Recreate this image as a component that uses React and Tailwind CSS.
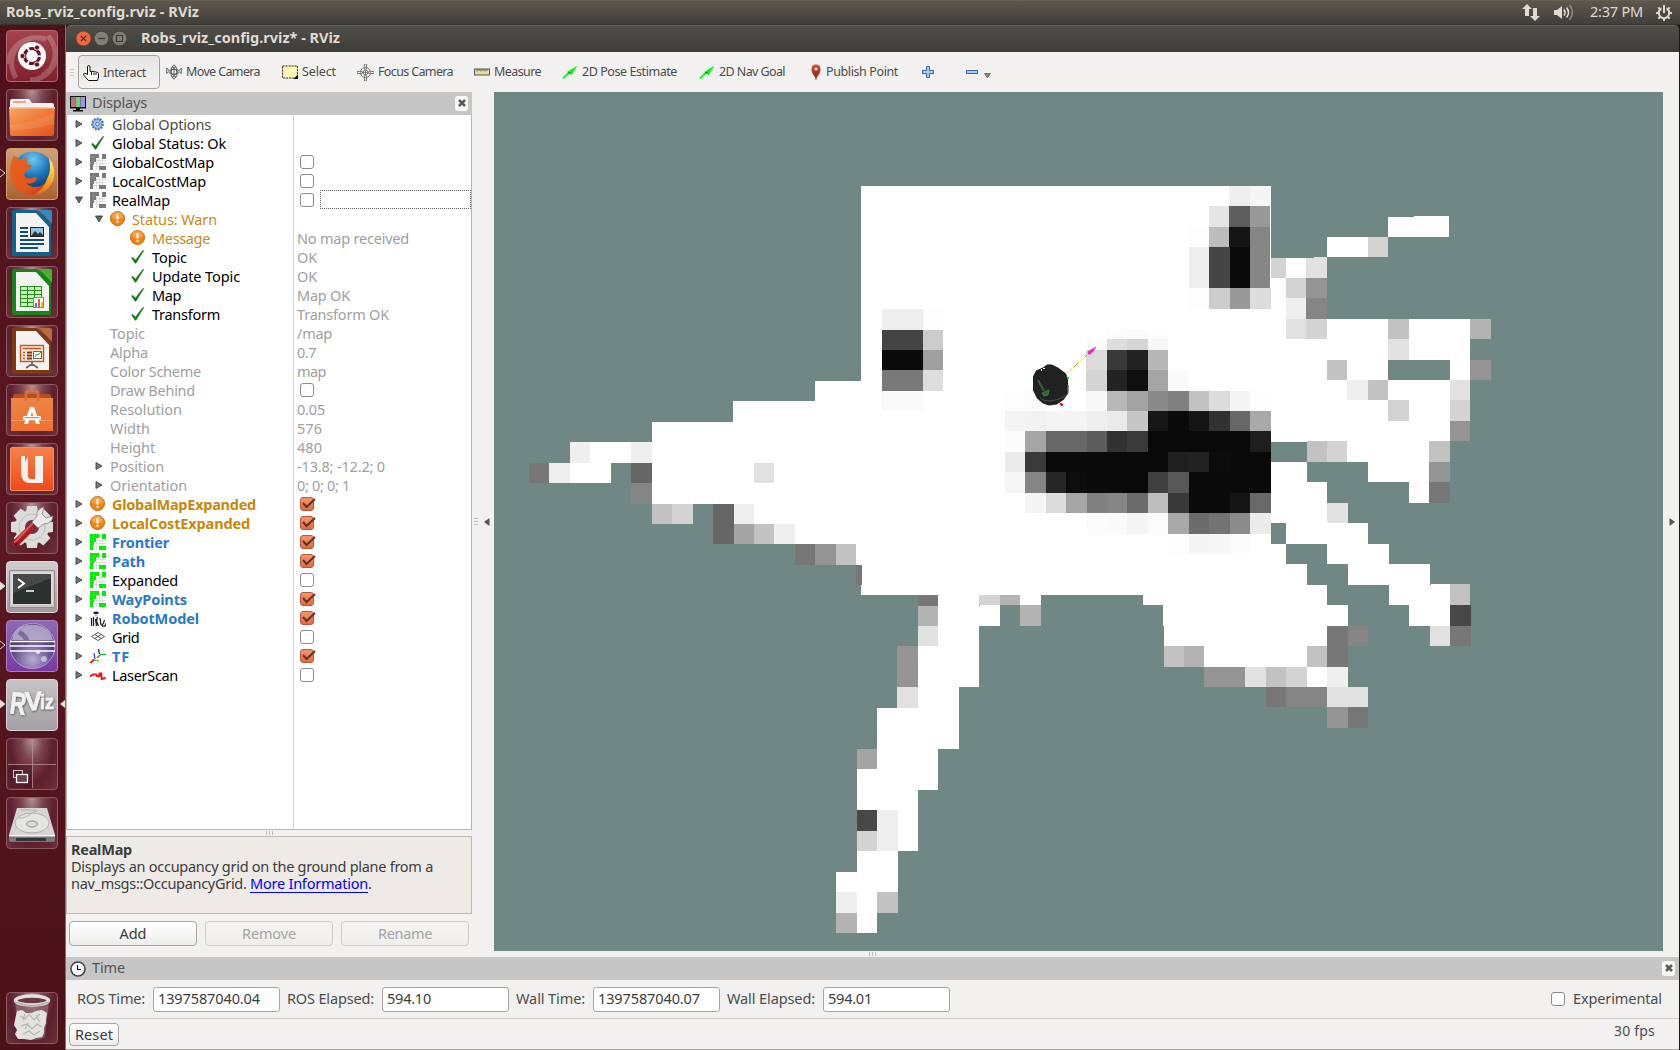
import React, { useLayoutEffect, useRef, useState } from 'react';

/* Single line of text spaced out to fill a given width */
function Fit({ w, className = '', children }) {
  const ref = useRef(null);
  const [spacing, setSpacing] = useState(0);
  useLayoutEffect(() => {
    const el = ref.current;
    const natural = el.getBoundingClientRect().width;
    setSpacing((w - natural) / children.length);
  }, []);
  return (
    <span className={`inline-block shrink-0 whitespace-pre ${className}`} style={{ width: w }}>
      <span ref={ref} style={{ letterSpacing: spacing }}>{children}</span>
    </span>
  );
}

/* ---------- launcher ---------- */

const Svg = ({ children, className = 'block size-[52px]' }) => (
  <svg viewBox="0 0 52 52" className={className}>{children}</svg>
);

const DashIcon = () => (
  <Svg>
    <path d="M2 34C4 14 22 4 40 9M50 20c2 18-12 30-26 30M10 48C0 30 8 12 26 8M42 6c12 14 8 32-6 40" fill="none" stroke="#fff" strokeOpacity=".22" strokeWidth="5" />
    <circle cx="26" cy="26" r="14" fill="#fff" />
    <circle cx="26" cy="26" r="7.5" fill="none" stroke="#651422" strokeWidth="3.2" strokeDasharray="13.7 2" strokeDashoffset="-1" />
    <g fill="#651422" stroke="#fff" strokeWidth=".8">
      <circle cx="16.500" cy="26" r="2.600" />
      <circle cx="31" cy="17.500" r="2.600" />
      <circle cx="31" cy="34.500" r="2.600" />
    </g>
  </Svg>
);

const FilesIcon = () => (
  <Svg>
    <defs>
      <linearGradient id="folder" x1="0" y1="0" x2="1" y2="1"><stop offset="0" stopColor="#f6a869" /><stop offset=".5" stopColor="#ee7b37" /><stop offset="1" stopColor="#e6501c" /></linearGradient>
    </defs>
    <path d="M4 20V12q0-2 2-2h17l3 4h20q2 0 2 2v6H4z" fill="#f4f1ee" />
    <rect x="7" y="12" width="13" height="2" fill="#f1a27c" />
    <path d="M3 18h46l-1 27q0 2-2 2H6q-2 0-2-2z" fill="url(#folder)" />
    <path d="M3 18h46v1.500H3z" fill="#fbc79e" />
    <path d="M4 36q22-2 44-12l-.5 11q-20 6-43.500 6z" fill="#fff" fillOpacity=".1" />
  </Svg>
);

const FirefoxIcon = () => (
  <Svg>
    <defs>
      <radialGradient id="globe" cx=".5" cy=".2" r=".8"><stop offset="0" stopColor="#6ec8ee" /><stop offset=".5" stopColor="#1c74b8" /><stop offset="1" stopColor="#0b2d63" /></radialGradient>
      <linearGradient id="fox" x1="0" y1="0" x2="1" y2="1"><stop offset="0" stopColor="#e6641e" /><stop offset=".6" stopColor="#e4571d" /><stop offset="1" stopColor="#c8301c" /></linearGradient>
      <linearGradient id="tail" x1="0" y1="0" x2="0" y2="1"><stop offset="0" stopColor="#fff08a" /><stop offset=".5" stopColor="#fcb92c" /><stop offset="1" stopColor="#e4631d" /></linearGradient>
    </defs>
    <circle cx="27" cy="24" r="20.500" fill="url(#globe)" />
    <path d="M8 8q4 1 6 4 4-2 8-2-3 4 0 6 2 1 4 1-1 4-6 6-3 3-1 6 4 3 9 0 3 0 3 2-4 6-11 4 6 6 15 3 7-4 8-12 2-4 4-2-1 12-8 18-8 6-19 4Q9 43 5 32 2 18 8 8z" fill="url(#fox)" />
    <path d="M43 10q7 9 5 20-5 15-20 17 11-7 13-16 5-8 2-21z" fill="url(#tail)" />
  </Svg>
);

function OfficeIcon({ edge, light, children }) {
  return (
    <Svg>
      <path d="M8 3h23l14 13v31q0 2-2 2H8q-2 0-2-2V5q0-2 2-2z" fill={edge} />
      <path d="M10 6h20l13 14v25H10z" fill="#f4f3f2" />
      <path d="M33 3h11q2 0 2 2v12z" fill={light} />
      {children}
    </Svg>
  );
}

const WriterIcon = () => (
  <OfficeIcon edge="#12628f" light="#2f8cbc">
    <path d="M14 21h8M14 25h8M14 29h8M14 33h24M14 37h24M14 41h18" stroke="#0d4f78" strokeWidth="1.800" />
    <rect x="24.500" y="20.500" width="13" height="9" fill="#8cc6e8" stroke="#222" />
    <path d="M25 29l4-5 3 3 2-2 4 4z" fill="#333" />
  </OfficeIcon>
);

const CalcIcon = () => (
  <OfficeIcon edge="#17841b" light="#43b52d">
    <rect x="14.500" y="20.500" width="21" height="20" fill="#c9f4bd" stroke="#24901b" />
    <path d="M14 24.500h22M14 28.500h22M14 32.500h22M14 36.500h22M21.500 20v21M28.500 20v21" stroke="#24901b" />
    <rect x="27.500" y="31.500" width="10" height="10" fill="#fff" stroke="#888" />
    <path d="M29 41v-4h2v4z" fill="#2a8fd0" /><path d="M32 41v-8h2v8z" fill="#e6611d" /><path d="M35 41v-5h2v5z" fill="#edb51f" />
  </OfficeIcon>
);

const ImpressIcon = () => (
  <OfficeIcon edge="#7c3a14" light="#b86b3c">
    <rect x="14.500" y="20.500" width="23" height="16" fill="#fbe7d9" stroke="#c3561c" strokeWidth="1.400" />
    <path d="M17 23.500h18" stroke="#c3561c" strokeWidth="1.500" />
    <path d="M17 27.500h2M17 30.500h2M17 33.500h2" stroke="#c3561c" strokeWidth="1.500" />
    <path d="M21 27.500h5M21 30.500h5M21 33.500h5" stroke="#7c3a14" strokeWidth="1.800" />
    <rect x="27.500" y="26.500" width="8" height="7" fill="#fff" stroke="#666" />
    <path d="M29 32l2-3 1 1 3-3" stroke="#2f9a31" fill="none" />
    <path d="M26 37v3M26 39l-6 4M26 39l6 4" stroke="#666" strokeWidth="1.800" fill="none" />
  </OfficeIcon>
);

const SoftwareIcon = () => (
  <Svg>
    <defs><linearGradient id="bag" x1="0" y1="0" x2="0" y2="1"><stop offset="0" stopColor="#e98648" /><stop offset="1" stopColor="#ef7031" /></linearGradient></defs>
    <path d="M8 10h36l3 7H5z" fill="#b84b20" />
    <path d="M5 14h42v33H5z" fill="url(#bag)" />
    <path d="M20 17V10q0-4 6-4t6 4v7" fill="none" stroke="#e16c37" strokeWidth="3" />
    <path d="M5 36h42v1H5z" fill="#f59a62" />
    <path d="M18 40l6-17h4l6 17h-4l-4-12-4 12z" fill="#fff" />
    <rect x="17" y="32" width="18" height="4" rx="1.500" fill="#fff" />
    <path d="M19 33.700h14" stroke="#e76a30" />
  </Svg>
);

const UbuntuOneIcon = () => (
  <Svg>
    <defs><linearGradient id="uone" x1="0" y1="0" x2="0" y2="1"><stop offset="0" stopColor="#f7824a" /><stop offset="1" stopColor="#f0491b" /></linearGradient></defs>
    <rect x="4.500" y="4.500" width="43" height="43" rx="1.500" fill="url(#uone)" stroke="#fb8d5b" />
    <path d="M15 13h7v20q0 3 3 3h4V13h8v27H25q-10 0-10-10z" fill="#f3f1f0" />
    <path d="M19 13h3l-3 6z" fill="#f2652f" />
  </Svg>
);

const SettingsIcon = () => (
  <Svg>
    <g fill="#dcdcdb">
      <circle cx="26" cy="25" r="17" />
      {[0, 45, 90, 135, 180, 225, 270, 315].map((a) => (
        <path key={a} d="M21 4h10l1 7H20z" transform={`rotate(${a} 26 25)`} />
      ))}
    </g>
    <circle cx="26" cy="25" r="13" fill="none" stroke="#bdbdbd" />
    <circle cx="26" cy="25" r="7" fill="#6c3640" />
    <path d="M10 41l18-18" stroke="#a81e22" strokeWidth="7" strokeLinecap="round" />
    <path d="M9 40l18-19" stroke="#e05655" strokeWidth="2" strokeLinecap="round" />
    <path d="M26 20l5-6q-1-7 7-9l-2 7 4 4 7-2q-1 8-9 8l-6 4z" fill="#e9e9e8" stroke="#858585" strokeWidth=".8" />
    <circle cx="10" cy="42" r="1.500" fill="#5b0d10" />
  </Svg>
);

const TerminalIcon = () => (
  <Svg>
    <rect x="3.500" y="9.500" width="45" height="37" rx="1" fill="#c9c8c6" stroke="#8e8d8b" />
    <rect x="5" y="11" width="42" height="33" fill="#dddcda" />
    <rect x="7" y="13" width="38" height="30" fill="#2c3230" />
    <path d="M7 13h38v4L7 32z" fill="#454a48" />
    <path d="M12 18l6 4.500-6 4.500" fill="none" stroke="#fff" strokeWidth="2" />
    <path d="M20 30h8" stroke="#fff" strokeWidth="1.600" />
  </Svg>
);

const EclipseIcon = () => (
  <Svg>
    <defs><radialGradient id="ecl" cx=".5" cy=".8" r=".8"><stop offset="0" stopColor="#b9abd6" /><stop offset=".6" stopColor="#59447f" /><stop offset="1" stopColor="#352456" /></radialGradient></defs>
    <circle cx="26.500" cy="26" r="22.500" fill="url(#ecl)" stroke="#bfb2dc" strokeWidth=".8" />
    <path d="M6 20Q8 5 26 4.500 44 5 47 20z" fill="#cdc4e0" fillOpacity=".75" />
    <path d="M13 12q12 8 5 12" stroke="#4d3971" strokeWidth="5" fill="none" strokeOpacity=".5" />
    <path d="M4 21.500h45M4 26h45M4 31h45" stroke="#fff" strokeWidth="1.500" />
    <circle cx="32" cy="32" r="2" fill="#fff" fillOpacity=".8" /><circle cx="38" cy="39" r="3" fill="#fff" fillOpacity=".5" />
  </Svg>
);

const RVizIcon = () => (
  <Svg>
    <defs><filter id="soft" x="-20%" y="-20%" width="140%" height="140%"><feDropShadow dx=".6" dy="1" stdDeviation="1" floodColor="#555" /></filter></defs>
    <g fontFamily="Liberation Sans" fontWeight="bold" fill="#f1f1f1" stroke="#f1f1f1" strokeWidth=".7" filter="url(#soft)">
      <text x="4" y="35" fontSize="31" textLength="16" lengthAdjust="spacingAndGlyphs" transform="rotate(7 12 26)">R</text>
      <text x="19" y="31" fontSize="26" textLength="17" lengthAdjust="spacingAndGlyphs" transform="rotate(-3 27 22)">V</text>
      <text x="34" y="30" fontSize="20" textLength="14" lengthAdjust="spacingAndGlyphs">iz</text>
    </g>
  </Svg>
);

const WorkspaceIcon = () => (
  <Svg>
    <rect x="2" y="27" width="24" height="23" fill="#3a0c18" fillOpacity=".35" />
    <path d="M26.500 2v48M2 26.500h48" stroke="#b58d93" strokeOpacity=".8" />
    <rect x="7.500" y="32.500" width="9" height="7" fill="none" stroke="#d5c4c8" />
    <rect x="10.500" y="36.500" width="11" height="8" fill="#6b4150" stroke="#fff" strokeWidth="1.300" />
  </Svg>
);

const DriveIcon = () => (
  <Svg>
    <path d="M11 11h30l8 27H3z" fill="#d5d5d4" />
    <path d="M3 38h46v6q0 1-2 1H5q-2 0-2-1z" fill="#77777a" />
    <path d="M3 38h46v1.500H3z" fill="#f2f2f2" />
    <path d="M10 41h30v3H10z" fill="#333" />
    <ellipse cx="26" cy="26" rx="17" ry="10" fill="#e4e4e3" stroke="#b0b0b0" />
    <ellipse cx="26" cy="27" rx="5.500" ry="3" fill="#d9d9d9" stroke="#909090" />
    <path d="M14 13q8-1 17 1-5 1-8 4-5 4-10 3" fill="none" stroke="#b4b4b4" />
  </Svg>
);

const TrashIcon = () => (
  <Svg>
    <path d="M9 10h34l-4 34q-1 4-13 4t-13-4z" fill="#9c7d82" fillOpacity=".55" />
    <g fill="#e2e2df">
      <path d="M11 19l5-1 4 3 5 0 5-2 6-1 5 3-1 6 0 4-2 5 0 5-2 4-6 1-5 2-6-1-7 0-3-5 2-4-3-5 1-5z" />
    </g>
    <path d="M14 24l5 3 4-5 5 6 6-6M15 34l6-2 5 5 5-5 5 3M17 42l6-3 5 4 6-4M19 22l-2 6M30 23l4 7M22 31l-3 6" fill="none" stroke="#b5b5b0" strokeWidth="1.100" />
    <ellipse cx="26" cy="8.500" rx="16.500" ry="4.500" fill="#6a3a42" stroke="#e2e2e0" strokeWidth="3.500" />
    <path d="M9 10q17 7 34 0" fill="none" stroke="#9b9b98" />
  </Svg>
);

const glass = 'bg-[radial-gradient(ellipse_at_50%_0%,#b39296_0%,#7b4650_30%,#5d1f2b_62%,#6a303b_100%)] border-[#8b5a62]';
const LAUNCHER = [
  { Icon: DashIcon, tile: 'bg-linear-to-b from-[#a3444e] to-[#80202d] border-[#b8656d]' },
  { Icon: FilesIcon, tile: glass },
  { Icon: FirefoxIcon, tile: 'bg-linear-to-b from-[#cda37a] to-[#a8622f] border-[#d6a06c]', run: 'hollow' },
  { Icon: WriterIcon, tile: glass },
  { Icon: CalcIcon, tile: glass },
  { Icon: ImpressIcon, tile: glass },
  { Icon: SoftwareIcon, tile: glass },
  { Icon: UbuntuOneIcon, tile: glass },
  { Icon: SettingsIcon, tile: glass },
  { Icon: TerminalIcon, tile: 'bg-linear-to-b from-[#d1cdcf] to-[#a49a9d] border-[#ddd9da]', run: 'solid' },
  { Icon: EclipseIcon, tile: 'bg-linear-to-b from-[#8e69b4] to-[#7a3aa5] border-[#a783c5]', run: 'hollow' },
  { Icon: RVizIcon, tile: 'bg-linear-to-b from-[#c6c3c5] to-[#a5a0a3] border-[#d6d3d5]', run: 'solid', active: true },
  { Icon: WorkspaceIcon, tile: glass },
  { Icon: DriveIcon, tile: glass },
];

function Tile({ Icon, tile, run, active }) {
  return (
    <div className="relative h-[52px] w-full pl-1.5">
      <div className={`relative size-[52px] overflow-hidden rounded-[4px] border ${tile}`}>
        <div className="absolute -top-px -left-px"><Icon /></div>
      </div>
      {run && (
        <svg viewBox="0 0 6 10" className="absolute top-5 left-0 h-2.5 w-1.5">
          <path d="M0 1l5 4-5 4" fill={run === 'solid' ? '#e9e2e3' : 'none'} stroke="#d8cfd1" />
        </svg>
      )}
      {active && (
        <svg viewBox="0 0 6 10" className="absolute top-5 right-0 h-2.5 w-1.5"><path d="M6 1L1 5l5 4z" fill="#e9e2e3" /></svg>
      )}
    </div>
  );
}

function Launcher() {
  return (
    <nav className="flex w-[65px] shrink-0 flex-col gap-[7px] bg-linear-to-b from-[#4d1119] via-[#5a1722] to-[#4a1118] pt-[5px] pb-1.5">
      {LAUNCHER.map((t, i) => <Tile key={i} {...t} />)}
      <div className="mt-auto"><Tile Icon={TrashIcon} tile={glass} /></div>
    </nav>
  );
}

/* ---------- small icons ---------- */

const I16 = ({ children, className = 'size-4' }) => <svg viewBox="0 0 16 16" className={`block shrink-0 ${className}`}>{children}</svg>;

const HandIcon = () => (
  <svg viewBox="0 0 16 16" className="size-4 shrink-0">
    <path d="M4.500 9.500V2q0-1.500 1.200-1.500T7 2v4.500q1-.8 2 0 1.200-.6 2.200.3 1.100-.5 2 .4 1.800-.4 2.300 1.300V12l-1 3.500h-9L1 10.500q-1-2 .8-2.300z" fill="#fff" stroke="#111" />
    <path d="M8.500 7v3M11 7.500V10M13 8v2" stroke="#111" />
  </svg>
);
const MoveIcon = () => (
  <I16>
    <g fill="none" stroke="#555" strokeWidth=".9">
      <circle cx="8" cy="8" r="3" />
      <path d="M8 .8l2.300 2.500H5.700zM8 15.200l2.300-2.500H5.700zM.7 4v5.500L3.500 7zM15.300 4v5.500L12.500 7zM3 6.500q5-3 10 0M3 8.500q5 3.500 10 0M8 3v10M5.500 3.500q-1.500 5 0 9M10.500 3.500q1.500 5 0 9" />
    </g>
  </I16>
);
const SelectIcon = () => (
  <I16>
    <rect x=".6" y="2" width="14.800" height="12" fill="#fdf6b5" stroke="#222" strokeDasharray="2 1" />
    <path d="M16 10.500V15h-4.500z" fill="#000" />
  </I16>
);
const FocusIcon = () => (
  <I16 className="size-[17px]">
    <g fill="none" stroke="#777" strokeWidth=".9">
      <circle cx="8" cy="8" r="4.800" /><circle cx="8" cy="8" r="2.200" />
      <path d="M7 0h2v5H7zM7 11h2v5H7zM0 7h5v2H0zM11 7h5v2h-5zM8 6v4M6 8h4" />
    </g>
  </I16>
);
const RulerIcon = () => (
  <I16>
    <rect x=".5" y="5" width="15" height="6" fill="#eadf9d" stroke="#555" />
    <path d="M3 5v2.500M5 5v2M7 5v2.500M9 5v2M11 5v2.500M13 5v2" stroke="#555" strokeWidth=".9" />
  </I16>
);
const ArrowIcon = () => (
  <I16>
    <path d="M1 14.500l6-6" stroke="#12f01e" strokeWidth="1.800" /><path d="M5 8L15.500 1.500 9.500 11.500 8 9.500z" fill="#0df61b" /><path d="M6 8.500l1.800 1.800L9 7.800z" fill="#0b8f14" />
  </I16>
);
const PinIcon = () => (
  <svg viewBox="0 0 12 17" className="h-[17px] w-3 shrink-0">
    <defs><linearGradient id="pin" x1="0" y1="0" x2="0" y2="1"><stop offset="0" stopColor="#dd4a30" /><stop offset="1" stopColor="#6e2a1a" /></linearGradient></defs>
    <path d="M6 .5q4.500 0 4.500 5Q10.500 9 7 13l-1 3.500L5 13Q1.500 9 1.500 5.500 1.500.5 6 .5z" fill="url(#pin)" />
    <circle cx="6" cy="5" r="1.500" fill="#fde8e2" />
  </svg>
);
const PlusIcon = () => (
  <svg viewBox="0 0 14 14" className="size-3.5 shrink-0"><path d="M5.500 1.500h3v4h4v3h-4v4h-3v-4h-4v-3h4z" fill="#a9c8ec" stroke="#3568ab" /></svg>
);
const MinusIcon = () => (
  <svg viewBox="0 0 14 14" className="size-3.5 shrink-0"><path d="M1.500 5.500h11v3h-11z" fill="#a9c8ec" stroke="#3568ab" /></svg>
);

function ScreenIcon() {
  return (
    <svg viewBox="0 0 16 16" className="size-4 shrink-0">
      <path d="M0 0h16v12.500H0z" fill="#111" />
      <path d="M1 1h4.600v10H1z" fill="#b9757b" /><path d="M5.600 1h4.800v10H5.600z" fill="#7acb80" /><path d="M10.400 1H15v10h-4.600z" fill="#9a98e2" />
      <path d="M6 12h4v2H6zM3 14h10v1.500H3z" fill="#111" />
    </svg>
  );
}
const ClockIcon = () => (
  <svg viewBox="0 0 16 16" className="size-4 shrink-0"><circle cx="8" cy="8" r="7" fill="#fff" stroke="#444" strokeWidth="1.600" /><path d="M7.500 4v4.500H11" fill="none" stroke="#111" strokeWidth="1.200" /></svg>
);

const GearIcon = () => (
  <I16 className="size-4 -translate-y-px">
    <circle cx="7.500" cy="8" r="5.400" fill="#a4c3ea" stroke="#3f6fb2" strokeWidth="2" strokeDasharray="1.900 1.100" />
    <circle cx="7.500" cy="8" r="4.400" fill="#a4c3ea" stroke="#4d7dbf" strokeWidth=".6" /><circle cx="7.500" cy="8" r="1.800" fill="#dbe8f8" stroke="#3f6fb2" strokeWidth=".9" />
  </I16>
);
const CheckIcon = () => (
  <I16 className="size-4 -translate-y-px"><path d="M1.500 9l1.200-.8L5.500 11 12.500 1.800l1.500-.5L6 14.200H5z" fill="#17771c" stroke="#17771c" strokeWidth=".4" /></I16>
);
const WarnIcon = () => (
  <I16 className="size-4 -translate-y-px">
    <circle cx="7.500" cy="7.500" r="7" fill="#f2830e" stroke="#b8641a" /><path d="M1.500 6.500a6 6 0 0112 0q-6 3-12 0z" fill="#fbb563" fillOpacity=".6" />
    <rect x="6.500" y="3" width="2" height="5.500" fill="#fff" /><rect x="6.500" y="9.800" width="2" height="2" fill="#fff" />
  </I16>
);
const MapIcon = ({ color }) => (
  <svg viewBox="0 0 16 16" className="block size-4 shrink-0 -translate-y-px" shapeRendering="crispEdges">
    <rect width="16" height="16" fill="#fff" />
    <path d="M6 5h1v11H6zM9 3h1v13H9zM12 0h1v16h-1zM3 9h13v1H3zM3 12h13v1H3zM6 6h10v1H6z" fill="#dedede" />
    <path d="M0 0h9v4H6v4H4v3H3v5H0zM12 0h4v5h-4zM9 12h7v4H9z" fill={color} />
    <path d="M3 0h1v8H3zM0 3h6v1H0zM0 9h3v1H0z" fill="#fff" fillOpacity=".12" />
  </svg>
);
const RobotIcon = () => (
  <I16 className="size-4">
    <path d="M3 1.500q3-2 6 0l-1 1.500H4z" fill="#17215f" /><path d="M4.500 3.500h3v2h-3z" fill="#bbb" />
    <path d="M1.500 7v8M3.500 6v9M5.500 8l1 7M7.500 6l-1 4 2 5M10 7l1 7M11.500 15l2-3 1-3M12 15.200h3l1-3" fill="none" stroke="#222" strokeWidth="1.300" />
  </I16>
);
const GridIcon = () => (
  <I16 className="size-4 -translate-y-px"><path d="M8 3.500l6.500 4L8 11.500 1.500 7.500zM4.700 5.500l6.600 4M11.300 5.500l-6.600 4" fill="none" stroke="#444" strokeWidth=".9" /></I16>
);
const TfIcon = () => (
  <I16 className="size-4">
    <path d="M8.500 0l1 5" stroke="#1717e0" strokeWidth="1.300" /><path d="M10 5.500h6" stroke="#10ba20" strokeWidth="1.300" /><path d="M10 6l-3 3" stroke="#e31" strokeWidth="1.500" />
    <path d="M4 4l1 6" stroke="#3b2be0" strokeWidth="1.200" /><path d="M4 11l5 .8" stroke="#4ae01c" strokeWidth="1.300" /><path d="M4 10.500L.5 14" stroke="#e11" strokeWidth="1.800" />
  </I16>
);
const LaserIcon = () => (
  <I16 className="size-4"><path d="M0 8.500l3-2h3.500L7 8h2.500V5.500h1.800l.4 5.500 4-1" fill="none" stroke="#f21414" strokeWidth="1.900" /></I16>
);

const ICONS = {
  gear: <GearIcon />, check: <CheckIcon />, warn: <WarnIcon />, gmap: <MapIcon color="#7a7a7a" />, map: <MapIcon color="#00ee00" />,
  robot: <RobotIcon />, grid: <GridIcon />, tf: <TfIcon />, laser: <LaserIcon />,
};

function Checkbox({ checked }) {
  return (
    <span className="relative block size-3.5 shrink-0">
      <span className={`block size-3.5 rounded-[3px] border ${checked ? 'border-[#b05a3e] bg-linear-to-b from-[#f49570] to-[#e5693f]' : 'border-[#8f8c88] bg-white'}`} />
      {checked && (
        <svg viewBox="0 0 16 14" className="absolute top-0 left-0 h-3.5 w-4"><path d="M3 6l3.500 4L15 2" fill="none" stroke="#633122" strokeWidth="2" /></svg>
      )}
    </span>
  );
}

function CloseButton() {
  return (
    <span className="flex h-[15px] w-[13px] items-center justify-center rounded-[3px] bg-[#f8f8f7]">
      <svg viewBox="0 0 8 8" className="size-2"><path d="M1 1l6 6M7 1L1 7" stroke="#5b5a56" strokeWidth="2.500" /></svg>
    </span>
  );
}

/* ---------- displays tree ---------- */

const ROWS = [
  { a: '>', icon: 'gear', t: 'Global Options', w: 99, c: 'text-[#4b4b4b]' },
  { a: '>', icon: 'check', t: 'Global Status: Ok', w: 114 },
  { a: '>', icon: 'gmap', t: 'GlobalCostMap', w: 102, box: 0 },
  { a: '>', icon: 'gmap', t: 'LocalCostMap', w: 94, box: 0 },
  { a: 'v', icon: 'gmap', t: 'RealMap', w: 58, box: 0, focus: true },
  { l: 1, a: 'v', icon: 'warn', t: 'Status: Warn', w: 85, c: 'text-[#c48c18]' },
  { l: 2, icon: 'warn', t: 'Message', w: 58, c: 'text-[#c48c18]', v: 'No map received', vw: 112 },
  { l: 2, icon: 'check', t: 'Topic', w: 35, v: 'OK', vw: 20 },
  { l: 2, icon: 'check', t: 'Update Topic', w: 88, v: 'OK', vw: 20 },
  { l: 2, icon: 'check', t: 'Map', w: 29, v: 'Map OK', vw: 53 },
  { l: 2, icon: 'check', t: 'Transform', w: 68, v: 'Transform OK', vw: 92 },
  { l: 1, t: 'Topic', w: 35, v: '/map', vw: 35 },
  { l: 1, t: 'Alpha', w: 38, v: '0.7', vw: 19 },
  { l: 1, t: 'Color Scheme', w: 91, v: 'map', vw: 29 },
  { l: 1, t: 'Draw Behind', w: 85, box: 0 },
  { l: 1, t: 'Resolution', w: 72, v: '0.05', vw: 28 },
  { l: 1, t: 'Width', w: 40, v: '576', vw: 25 },
  { l: 1, t: 'Height', w: 45, v: '480', vw: 25 },
  { l: 1, a: '>', t: 'Position', w: 54, v: '-13.8; -12.2; 0', vw: 88 },
  { l: 1, a: '>', t: 'Orientation', w: 77, v: '0; 0; 0; 1', vw: 53 },
  { a: '>', icon: 'warn', t: 'GlobalMapExpanded', w: 144, c: 'font-bold text-[#c6870a]', box: 1 },
  { a: '>', icon: 'warn', t: 'LocalCostExpanded', w: 138, c: 'font-bold text-[#c6870a]', box: 1 },
  { a: '>', icon: 'map', t: 'Frontier', w: 57, c: 'font-bold text-[#2a78c8]', box: 1 },
  { a: '>', icon: 'map', t: 'Path', w: 33, c: 'font-bold text-[#2a78c8]', box: 1 },
  { a: '>', icon: 'map', t: 'Expanded', w: 66, box: 0 },
  { a: '>', icon: 'map', t: 'WayPoints', w: 75, c: 'font-bold text-[#2a78c8]', box: 1 },
  { a: '>', icon: 'robot', t: 'RobotModel', w: 87, c: 'font-bold text-[#2a78c8]', box: 1 },
  { a: '>', icon: 'grid', t: 'Grid', w: 27, box: 0 },
  { a: '>', icon: 'tf', t: 'TF', w: 18, c: 'font-bold text-[#2a78c8]', box: 1 },
  { a: '>', icon: 'laser', t: 'LaserScan', w: 66, box: 0 },
];

const INDENT = ['pl-[9px]', 'pl-[29px]', 'pl-[49px]'];

function Row({ l = 0, a, icon, t, w, c, v, vw, box, focus }) {
  const color = c || (icon ? 'text-black' : 'text-[#a0a0a0]');
  return (
    <div className="flex h-[19px] text-[14.5px] leading-[19px]">
      <div className={`flex w-[227px] shrink-0 items-center ${INDENT[l]}`}>
        <svg viewBox="0 0 8 8" className="mr-[7px] size-2 shrink-0 -translate-y-px">
          {a === '>' && <path d="M1 .5L7 4 1 7.500z" fill="#777" stroke="#444" strokeWidth=".9" />}
          {a === 'v' && <path d="M.5 1L4 7 7.500 1z" fill="#666" stroke="#444" strokeWidth=".9" />}
        </svg>
        {icon && <span className="mr-1.5">{ICONS[icon]}</span>}
        <Fit w={w} className={color}>{t}</Fit>
      </div>
      <div className="flex grow items-center pl-1 text-[#a0a0a0]">
        {v && <Fit w={vw}>{v}</Fit>}
        {box !== undefined && <span className="ml-[3px] -translate-y-px"><Checkbox checked={!!box} /></span>}
        {focus && <span className="ml-1.5 h-[19px] grow -translate-y-px border border-dotted border-[#666]" />}
      </div>
    </div>
  );
}

function DockHeader({ icon, title, w }) {
  return (
    <div className="flex h-[23px] shrink-0 items-center bg-[#c6c6c6] pr-1 pl-1 text-[14.5px] text-[#555]">
      {icon}
      <Fit w={w} className="mb-[3px] ml-1.5 leading-5">{title}</Fit>
      <span className="mb-px ml-auto"><CloseButton /></span>
    </div>
  );
}

function PushButton({ label, w, disabled, className }) {
  return (
    <span className={`flex items-center justify-center rounded-[4px] border bg-linear-to-b ${disabled ? 'border-[#cfccc9] from-[#f5f4f3] to-[#efeeec] text-[#a5a3a1]' : 'border-[#aaa7a3] from-white to-[#ededeb] text-[#3c3c3c]'} ${className}`}>
      <Fit w={w}>{label}</Fit>
    </span>
  );
}

function DisplaysPanel() {
  return (
    <section className="flex w-[406px] shrink-0 flex-col">
      <DockHeader icon={<ScreenIcon />} title="Displays" w={55} />
      <div className="relative h-[715px] shrink-0 border-r border-b border-l border-[#b8b5b1] bg-white">
        <div className="absolute top-0 bottom-0 left-[226px] w-px bg-[#d6d6d6]" />
        <div className="-ml-px">{ROWS.map((r, i) => <Row key={i} {...r} />)}</div>
      </div>
      <div className="flex h-[6px] shrink-0 items-center justify-center gap-0.5">
        <i className="h-1 w-px bg-[#bbb]" /><i className="h-1 w-px bg-[#bbb]" /><i className="h-1 w-px bg-[#bbb]" />
      </div>
      <div className="h-[78px] shrink-0 border border-[#bdb9b5] bg-[#eeebe7] pt-1 pl-1 text-[14.5px] leading-[17px] text-[#3c3c3c]">
        <div><Fit w={61} className="font-bold">RealMap</Fit></div>
        <div><Fit w={362}>Displays an occupancy grid on the ground plane from a</Fit></div>
        <div className="flex">
          <Fit w={179}>nav_msgs::OccupancyGrid. </Fit>
          <Fit w={118} className="h-[18px] border-b border-[#00f] text-[#00f]">More Information</Fit>
          <span>.</span>
        </div>
      </div>
      <div className="mt-[7px] flex gap-2 pl-[3px] text-[14.5px]">
        <PushButton label="Add" w={27} className="h-[25px] w-32" />
        <PushButton label="Remove" w={54} disabled className="h-[25px] w-32" />
        <PushButton label="Rename" w={54} disabled className="h-[25px] w-32" />
      </div>
    </section>
  );
}

/* ---------- map view ---------- */

const T = '#6f8884';
/* Each entry is [y, height, x0, colour, x1, colour, x2, ...]; null leaves a gap. */
const W = '#fff';
const OUTER = [
  [381, 20, 815, W, 861],
  [401, 21, 733, W, 861],
  [422, 20, 652, W, 861],
  [442, 21, 570, '#efefef', 590, W, 631, '#efefef', 652, W, 861],
  [463, 20, 529, '#777', 549, '#efefef', 570, W, 611, null, 631, '#666', 652, W, 754, '#e1e1e1', 774, W, 861],
  [483, 21, 631, '#858585', 652, W, 861],
  [504, 20, 652, '#c2c2c2', 672, '#d3d3d3', 693, null, 713, '#666', 734, '#efefef', 754, W, 861],
  [524, 20, 713, '#666', 734, '#a4a4a4', 754, '#c2c2c2', 774, '#efefef', 795, W, 861],
  [544, 21, 795, '#777', 815, '#949494', 836, '#c2c2c2', 856, W, 862],
  [565, 20, 856, '#777', 862],
  [217, 20, 1388, W, 1449],
  [216, 1, 1414, W, 1449],
  [237, 20, 1327, W, 1368, '#d3d3d3', 1388],
  [257, 1, 1314, '#e1e1e1', 1327],
  [258, 20, 1271, '#d3d3d3', 1286, W, 1306, '#e1e1e1', 1327],
  [278, 20, 1271, W, 1286, '#d3d3d3', 1306, '#949494', 1327],
  [298, 21, 1271, W, 1286, '#efefef', 1306, '#858585', 1327],
  [319, 20, 1271, W, 1286, '#e1e1e1', 1306, '#d3d3d3', 1327, W, 1388, '#c2c2c2', 1409, W, 1470, '#b3b3b3', 1491],
  [339, 21, 1271, W, 1388, '#e1e1e1', 1409, W, 1470],
  [360, 20, 1271, W, 1327, '#c2c2c2', 1347, W, 1388, null, 1450, W, 1470, '#949494', 1491],
  [380, 21, 1271, W, 1347, '#efefef', 1368, '#c2c2c2', 1388, W, 1450, '#e1e1e1', 1470],
  [400, 21, 1271, W, 1388, '#d3d3d3', 1409, W, 1450, '#d3d3d3', 1470],
  [421, 20, 1271, W, 1450, '#949494', 1470],
  [441, 21, 1271, null, 1307, '#c2c2c2', 1327, '#d3d3d3', 1347, W, 1429, '#c2c2c2', 1450],
  [441, 1, 1271, W, 1307],
  [462, 20, 1271, W, 1307, null, 1368, W, 1429, '#949494', 1450],
  [482, 21, 1271, W, 1327, null, 1409, W, 1429, '#777', 1450],
  [503, 20, 1271, W, 1327, '#e1e1e1', 1348],
  [523, 21, 1286, W, 1368],
  [544, 20, 1271, W, 1286, null, 1327, W, 1389],
  [564, 21, 1271, W, 1307, null, 1348, W, 1430],
  [584, 21, 1271, null, 1431, W, 1450, '#c2c2c2', 1470],
  [585, 20, 1271, W, 1327, null, 1389, W, 1450],
  [595, 10, 1143, W, 1327],
  [605, 21, 1163, W, 1348, null, 1409, W, 1450, '#484848', 1471],
  [626, 20, 1164, W, 1327, '#777', 1348, '#858585', 1368, null, 1430, '#e1e1e1', 1450, '#777', 1471],
  [646, 21, 1164, '#c2c2c2', 1184, '#b3b3b3', 1204, W, 1307, '#c2c2c2', 1327, '#777', 1348],
  [667, 20, 1204, '#949494', 1245, '#e1e1e1', 1266, '#c2c2c2', 1286, '#d3d3d3', 1307, W, 1327, '#efefef', 1348],
  [687, 20, 1266, '#777', 1286, '#858585', 1327, '#e1e1e1', 1368],
  [707, 21, 1327, '#949494', 1348, '#777', 1368],
  [595, 11, 918, '#777', 938, W, 979],
  [595, 10, 979, '#d3d3d3', 1000, '#b3b3b3', 1020, W, 1041],
  [605, 21, 980, W, 1000, null, 1020, '#b3b3b3', 1041],
  [606, 20, 918, '#b3b3b3', 938, W, 980],
  [626, 20, 918, '#e1e1e1', 938, W, 979],
  [646, 41, 897, '#949494', 918, W, 979],
  [687, 21, 897, '#e1e1e1', 918, W, 959],
  [708, 41, 877, W, 959],
  [749, 20, 857, '#a4a4a4', 877, W, 938],
  [769, 21, 857, W, 938],
  [790, 20, 857, W, 918],
  [810, 21, 857, '#484848', 877, '#efefef', 898, W, 918],
  [831, 20, 857, '#d3d3d3', 877, '#efefef', 898, W, 918],
  [851, 21, 857, W, 898],
  [872, 20, 836, W, 898],
  [892, 21, 836, '#efefef', 857, W, 877, '#c2c2c2', 898],
  [913, 20, 836, '#b3b3b3', 857, W, 877],
];

const INNER = [
  [309, 21, 882, '#eee', 923, '#fdfdfd', 943],
  [330, 20, 882, '#444', 923, '#ccc', 943],
  [350, 20, 882, '#0a0a0a', 923, '#9f9f9f', 943],
  [370, 21, 882, '#797979', 923, '#ddd', 943],
  [391, 20, 882, '#f9f9f9', 923],
  [186, 20, 1229, '#efefef', 1250, '#f5f5f5', 1270],
  [206, 21, 1209, '#e5e5e5', 1229, '#5e5e5e', 1250, '#999', 1270],
  [227, 20, 1189, '#fdfdfd', 1209, '#bcbcbc', 1229, '#151515', 1250, '#858585', 1270],
  [247, 41, 1189, '#eee', 1209, '#444', 1230, '#0a0a0a', 1250, '#868686', 1270],
  [288, 21, 1189, '#fdfdfd', 1209, '#ccc', 1230, '#999', 1250, '#dcdcdc', 1271],
  [329, 10, 1107, '#fcfcfc', 1127, '#fbfbfb', 1148, '#fdfdfd', 1168],
  [339, 11, 1086, '#fcfcfc', 1107, '#ddd', 1127, '#d5d5d5', 1148, '#f8f8f8', 1168],
  [350, 20, 1086, '#dcdcdc', 1107, '#393939', 1127, '#222', 1148, '#b7b7b7', 1168],
  [370, 21, 1086, '#d4d4d4', 1107, '#232323', 1127, '#0f0f0f', 1148, '#a5a5a5', 1168, '#fafafa', 1189],
  [391, 20, 1005, '#fdfdfd', 1025, '#fbfbfb', 1046, null, 1086, '#f8f8f8', 1107, '#b8b8b8', 1127, '#a3a3a3', 1148, '#8a8a8a', 1168, '#808080', 1189, '#c2c2c2', 1209, '#dcdcdc', 1230, '#f5f5f5', 1250, '#fdfdfd', 1271],
  [411, 20, 1005, '#f4f4f4', 1025, '#f2f2f2', 1046, '#f4f4f4', 1087, '#efefef', 1107, '#eaeaea', 1127, '#c6c6c6', 1148, '#171717', 1168, '#0a0a0a', 1189, '#151515', 1209, '#323232', 1230, '#676767', 1250, '#a9a9a9', 1271],
  [431, 21, 1005, '#fcfcfc', 1025, '#a5a5a5', 1046, '#676767', 1087, '#5d5d5d', 1107, '#323232', 1127, '#3a3a3a', 1148, '#0a0a0a', 1250, '#1e1e1e', 1271],
  [452, 20, 1005, '#ebebeb', 1025, '#3a3a3a', 1046, '#0a0a0a', 1168, '#202020', 1189, '#232323', 1209, '#0c0c0c', 1230, '#0a0a0a', 1271],
  [472, 21, 1005, '#f6f6f6', 1025, '#848484', 1046, '#262626', 1066, '#0d0d0d', 1087, '#0a0a0a', 1148, '#404040', 1168, '#575757', 1189, '#0a0a0a', 1271],
  [493, 20, 1025, '#f5f5f5', 1046, '#dcdcdc', 1066, '#a5a5a5', 1087, '#808080', 1107, '#868686', 1127, '#6b6b6b', 1148, '#bdbdbd', 1168, '#393939', 1189, '#0a0a0a', 1230, '#151515', 1250, '#696969', 1271],
  [513, 21, 1087, '#fbfbfb', 1107, '#fafafa', 1127, '#f5f5f5', 1148, '#fbfbfb', 1168, '#a8a8a8', 1189, '#6c6c6c', 1209, '#737373', 1230, '#8c8c8c', 1250, '#ebebeb', 1271],
  [534, 20, 1169, '#fdfdfd', 1189, '#f5f5f5', 1209, '#f7f7f7', 1230, '#fbfbfb', 1250],
];

function cells(rows) {
  const out = [];
  rows.forEach(([y, h, ...rest], r) => {
    for (let i = 0; i + 2 < rest.length; i += 2) {
      if (rest[i + 1]) out.push(<rect key={`${r}-${i}`} x={rest[i]} y={y} width={rest[i + 2] - rest[i]} height={h} fill={rest[i + 1]} />);
    }
  });
  return out;
}

function MapView() {
  return (
    <svg viewBox="494 92 1169 859" className="block h-[859px] w-[1169px] shrink-0" shapeRendering="crispEdges">
      <rect x="494" y="92" width="1169" height="859" fill={T} />
      {cells(OUTER)}
      <rect x="861" y="186" width="410" height="409" fill={W} />
      {cells(INNER)}
      <rect x="856" y="565" width="6" height="20" fill="#777" />
      {/* robot body */}
      <path d="M1047 364.500h5l6 3 8 6 2 6v14l-4 6-7 5-8 1-6-2-6-5-4-8v-14l3-6 7-3z" fill="#222" shapeRendering="auto" />
      <path d="M1068 385v8" stroke="#666" strokeWidth="1.500" fill="none" shapeRendering="auto" />
      <path d="M1041 370.500l5-3" stroke="#fff" strokeWidth="1.200" strokeDasharray="1.500 1.500" />
      <path d="M1038 380l6 11" stroke="#35603a" strokeWidth="2" shapeRendering="auto" />
      <path d="M1042 393l7-3-1 5-4 1z" fill="#2f6b36" stroke="#3d7a42" shapeRendering="auto" />
      <path d="M1040 398q8 7 26-2" stroke="#4a4a4a" fill="none" shapeRendering="auto" />
      {/* path and goal */}
      <path d="M1066.500 373.500l20-18" stroke="#f4f436" shapeRendering="auto" />
      <path d="M1074 367l4-4M1085 357l2-2" stroke="#a79c1d" shapeRendering="auto" />
      <path d="M1088 351.500l4.500-2.500 3.500-2-3 4.500-3.500 3-1.500-1z" fill="#f01fc0" stroke="#f01fc0" strokeWidth=".6" shapeRendering="auto" />
      <rect x="1067" y="377" width="2" height="2" fill="#0be01b" />
      <path d="M1060 403h2v1h1v2h-2v-1h-1z" fill="#f00" />
    </svg>
  );
}

/* ---------- chrome ---------- */

function TopPanel() {
  return (
    <header className="flex h-[25px] shrink-0 items-center border-t border-b border-t-[#66604f] border-b-[#33322e] bg-linear-to-b from-[#5b584e] to-[#403f3a] pl-1.5 text-[#dfdbd2]">
      <Fit w={193} className="mb-0.5 text-[14.5px] font-bold">Robs_rviz_config.rviz - RViz</Fit>
      <div className="ml-auto flex items-center pr-2">
        <svg viewBox="0 0 18 17" className="mr-3.5 h-[17px] w-[18px]" fill="#dfdbd2"><path d="M5 0l5 5H7v7H3V5H0zM13 17l-5-5h3V4h4v8h3z" /></svg>
        <svg viewBox="0 0 20 17" className="mr-[16px] h-[17px] w-5"><path d="M0 6h3l5-4v13l-5-4H0z" fill="#dfdbd2" /><path d="M10 5.500q2 3 0 6M12.500 3.500q4 5 0 10" fill="none" stroke="#dfdbd2" strokeWidth="1.600" /><path d="M15.500 1q6 7 0 15" fill="none" stroke="#8b8880" strokeWidth="1.600" /></svg>
        <Fit w={53} className="mr-[13px] mb-0.5 text-[14.5px]">2:37 PM</Fit>
        <svg viewBox="0 0 16 16" className="size-4">
          <circle cx="8" cy="8" r="5.200" fill="none" stroke="#dfdbd2" strokeWidth="2" />
          {[45, 90, 135, 180, 225, 270, 315].map((a) => <path key={a} d="M7 0h2v3H7z" fill="#dfdbd2" transform={`rotate(${a} 8 8)`} />)}
          <path d="M5.500 0h5v4h-5z" fill="#4c4a43" /><path d="M7 0h2v8H7z" fill="#dfdbd2" />
        </svg>
      </div>
    </header>
  );
}

function TitleBar() {
  return (
    <div className="flex h-[27px] shrink-0 items-center rounded-t-[5px] border-t border-[#696660] bg-linear-to-b from-[#504f49] to-[#3d3c37] pb-0.5 pl-2.5 text-[#dfdbd2]">
      <span className="flex gap-[3px]">
        <svg viewBox="0 0 15 15" className="size-[15px]"><circle cx="7.500" cy="7.500" r="7.300" fill="#ec6a43" stroke="#8f3d22" strokeWidth=".6" /><path d="M4.800 4.800l5.400 5.400M10.200 4.800l-5.400 5.400" stroke="#5b2413" strokeWidth="1.200" /></svg>
        <svg viewBox="0 0 15 15" className="size-[15px]"><circle cx="7.500" cy="7.500" r="7.300" fill="#807d75" stroke="#33322e" strokeWidth=".6" /><path d="M4 7.500h7" stroke="#3a3935" strokeWidth="1.200" /></svg>
        <svg viewBox="0 0 15 15" className="size-[15px]"><circle cx="7.500" cy="7.500" r="7.300" fill="#807d75" stroke="#33322e" strokeWidth=".6" /><rect x="4.500" y="4.500" width="6" height="6" fill="none" stroke="#3a3935" strokeWidth="1.100" /></svg>
      </span>
      <Fit w={199} className="ml-[14px] text-[14.5px] font-bold">Robs_rviz_config.rviz* - RViz</Fit>
    </div>
  );
}

function Tool({ icon, label, w, className }) {
  return <span className={`flex items-center gap-1 ${className}`}>{icon}<Fit w={w}>{label}</Fit></span>;
}

function Toolbar() {
  return (
    <div className="flex h-10 shrink-0 items-center pl-1 text-[12.5px] text-[#4c4c4c]">
      <span className="flex w-1 flex-col gap-0.5"><i className="h-px bg-[#c9c6c3]" /><i className="h-px bg-[#c9c6c3]" /><i className="h-px bg-[#c9c6c3]" /></span>
      <span className="ml-1 flex h-[34px] w-[82px] items-center gap-1 rounded-[4px] border border-[#a5a29e] bg-linear-to-b from-[#e6e5e3] to-[#f3f2f1] pt-0.5 pl-1"><HandIcon /><Fit w={43}>Interact</Fit></span>
      <Tool icon={<MoveIcon />} label="Move Camera" w={74} className="ml-1.5" />
      <Tool icon={<SelectIcon />} label="Select" w={34} className="ml-[22px]" />
      <Tool icon={<FocusIcon />} label="Focus Camera" w={75} className="ml-[21px]" />
      <Tool icon={<RulerIcon />} label="Measure" w={47} className="ml-[21px]" />
      <Tool icon={<ArrowIcon />} label="2D Pose Estimate" w={95} className="ml-[21px]" />
      <Tool icon={<ArrowIcon />} label="2D Nav Goal" w={66} className="ml-[22px]" />
      <Tool icon={<PinIcon />} label="Publish Point" w={72} className="ml-[25px]" />
      <span className="ml-[23px]"><PlusIcon /></span>
      <span className="ml-[30px]"><MinusIcon /></span>
      <svg viewBox="0 0 7 6" className="mt-[7px] ml-[5px] h-1.5 w-[7px]"><path d="M.5.5h6L3.500 5z" fill="#888" stroke="#666" strokeWidth=".8" /></svg>
    </div>
  );
}

const Field = ({ label, lw, value, vw }) => (
  <span className="flex items-center">
    <Fit w={lw}>{label}</Fit>
    <span className="ml-2 flex h-[25px] w-[127px] items-center rounded-[3px] border border-[#a9a6a2] bg-white pl-1 text-[#3c3c3c]"><Fit w={vw}>{value}</Fit></span>
  </span>
);

function TimePanel() {
  return (
    <>
      <DockHeader icon={<ClockIcon />} title="Time" w={33} />
      <div className="flex h-[39px] shrink-0 items-center gap-[7px] border-b border-[#d2cfcc] pr-[17px] pl-[11px] text-[14.5px] text-[#4c4c4c]">
        <Field label="ROS Time:" lw={68} value="1397587040.04" vw={102} />
        <Field label="ROS Elapsed:" lw={87} value="594.10" vw={44} />
        <Field label="Wall Time:" lw={69} value="1397587040.07" vw={102} />
        <Field label="Wall Elapsed:" lw={88} value="594.01" vw={44} />
        <span className="ml-auto flex items-center gap-2"><Checkbox /><Fit w={89}>Experimental</Fit></span>
      </div>
      <div className="flex grow items-start border-b border-[#a9a6a2] pr-[24px] pl-[3px] text-[14.5px] text-[#4c4c4c]">
        <PushButton label="Reset" w={38} className="mt-1 h-[23px] w-[50px]" />
        <Fit w={41} className="mt-px ml-auto text-[14px]">30 fps</Fit>
      </div>
    </>
  );
}

export default function App() {
  return (
    <div className="flex h-[1050px] w-[1680px] flex-col overflow-hidden bg-[#2b1517] font-['Noto_Sans',sans-serif]">
      <TopPanel />
      <div className="flex min-h-0 grow">
        <Launcher />
        <main className="flex w-[1614px] flex-col border-l border-[#77746f] bg-[#3d1218]">
          <TitleBar />
          <div className="flex min-h-0 grow flex-col bg-[#f2f1ef]">
            <Toolbar />
            <div className="flex h-[865px] shrink-0">
              <DisplaysPanel />
              <div className="flex w-[22px] shrink-0 items-start pt-[426px] pl-0.5">
                <span className="flex w-1 flex-col gap-0.5"><i className="h-px bg-[#c0bdba]" /><i className="h-px bg-[#c0bdba]" /><i className="h-px bg-[#c0bdba]" /></span>
                <svg viewBox="0 0 6 8" className="ml-1.5 h-2 w-1.5"><path d="M5.500 0v8L0 4z" fill="#555" /></svg>
              </div>
              <div className="flex flex-col">
                <MapView />
                <div className="flex h-1.5 items-center gap-0.5 pl-[375px]"><i className="h-1 w-px bg-[#bbb]" /><i className="h-1 w-px bg-[#bbb]" /><i className="h-1 w-px bg-[#bbb]" /></div>
              </div>
              <svg viewBox="0 0 6 8" className="mt-[426px] ml-1.5 h-2 w-1.5"><path d="M.5 0v8L6 4z" fill="#555" /></svg>
            </div>
            <TimePanel />
          </div>
        </main>
      </div>
    </div>
  );
}
